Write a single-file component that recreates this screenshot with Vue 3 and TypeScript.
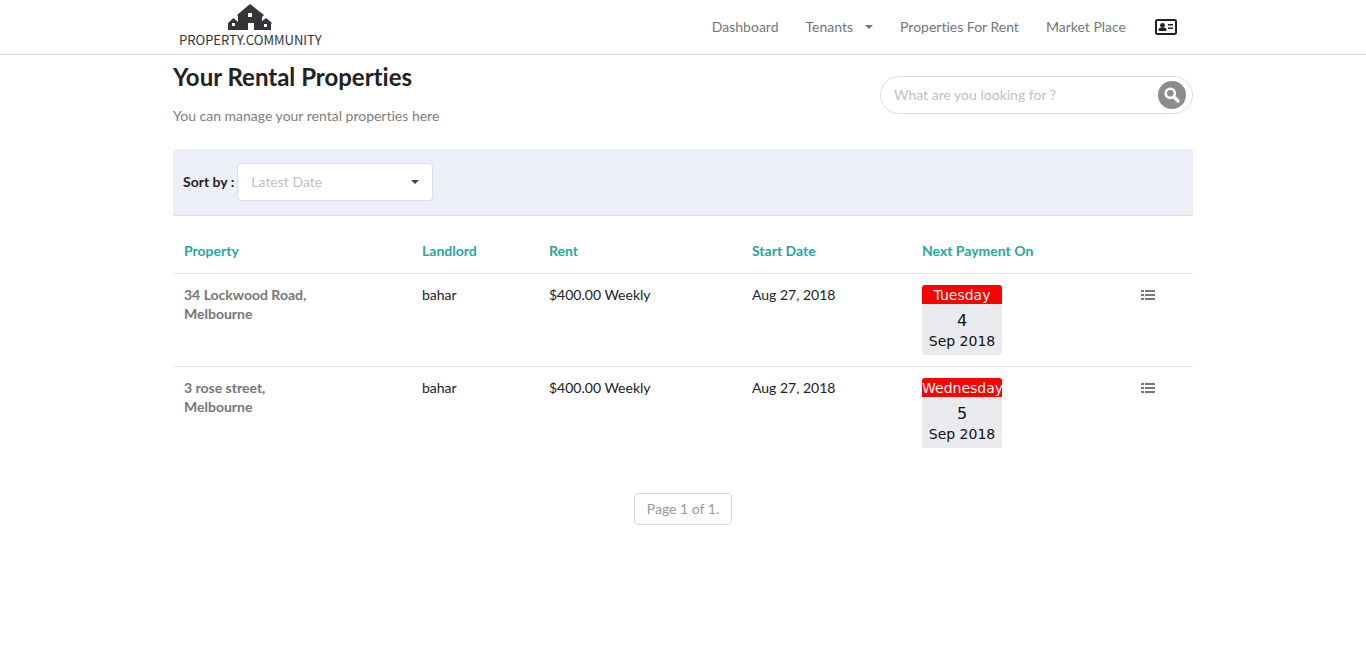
<script setup lang="ts">
import { ref } from 'vue'

interface Rental {
  street: string
  city: string
  landlord: string
  rent: string
  start: string
  weekday: string
  day: number
  month: string
}

const sort = ref('')
const query = ref('')
const rentals: Rental[] = [
  { street: '34 Lockwood Road,', city: 'Melbourne', landlord: 'bahar', rent: '$400.00 Weekly', start: 'Aug 27, 2018', weekday: 'Tuesday', day: 4, month: 'Sep 2018' },
  { street: '3 rose street,', city: 'Melbourne', landlord: 'bahar', rent: '$400.00 Weekly', start: 'Aug 27, 2018', weekday: 'Wednesday', day: 5, month: 'Sep 2018' },
]
</script>

<template>
  <div class="page">
    <header class="topbar">
      <div class="container topbar-inner">
        <a href="#" class="logo" aria-label="Property Community home">
          <svg class="houses" width="44" height="26" viewBox="0 0 44 26" aria-hidden="true">
            <path fill="#333538" fill-rule="evenodd" d="M0 26V19L5.500 14L10 18V12L9 11L22 0L36 11L34 13V17L38 14L44 19L43 20V26H26V19H20V26ZM4 19V22H7V19ZM20 9V13H24V9ZM36 20V23H39V20Z" />
          </svg>
          <span class="logo-text">PROPERTY.COMMUNITY</span>
        </a>
        <nav class="nav">
          <a href="#">Dashboard</a>
          <a href="#" class="with-caret">Tenants
            <svg width="8" height="4" viewBox="0 0 8 4" aria-hidden="true"><path fill="#777" d="M0 0H8L4 4Z" /></svg>
          </a>
          <a href="#">Properties For Rent</a>
          <a href="#">Market Place</a>
          <a href="#" class="card-link" aria-label="Account">
            <svg width="22" height="16" viewBox="0 0 22 16" aria-hidden="true">
              <rect x="1" y="1" width="20" height="14" rx="1.5" fill="none" stroke="#222" stroke-width="2" />
              <circle cx="7.5" cy="6.3" r="2.4" fill="#222" />
              <path fill="#222" d="M3.6 12V10.6Q3.8 8.6 6 8.6H9Q11.2 8.6 11.4 10.6V12ZM13 5H18V6.500H13ZM13 8.5H18V10H13Z" />
            </svg>
          </a>
        </nav>
      </div>
    </header>

    <main class="container">
      <div class="intro">
        <div>
          <h1>Your Rental Properties</h1>
          <p>You can manage your rental properties here</p>
        </div>
        <form class="search" @submit.prevent>
          <input v-model="query" type="text" aria-label="Search" placeholder="What are you looking for ?">
          <button type="submit" aria-label="Search">
            <svg width="16" height="16" viewBox="0 0 16 16" aria-hidden="true">
              <circle cx="6.3" cy="6.3" r="4.6" fill="none" stroke="#fff" stroke-width="2.6" />
              <path d="M10 10L14 14" stroke="#fff" stroke-width="3.2" stroke-linecap="round" />
            </svg>
          </button>
        </form>
      </div>

      <div class="sortbar">
        <label for="sort">Sort by :</label>
        <div class="select">
          <select id="sort" v-model="sort">
            <option value="">Latest Date</option>
            <option value="old">Earliest Date</option>
          </select>
          <svg width="8" height="4" viewBox="0 0 8 4" aria-hidden="true"><path fill="#444" d="M0 0H8L4 4Z" /></svg>
        </div>
      </div>

      <table>
        <colgroup>
          <col class="c-property"><col class="c-landlord"><col class="c-rent"><col class="c-start"><col class="c-next"><col class="c-menu">
        </colgroup>
        <thead>
          <tr>
            <th>Property</th>
            <th>Landlord</th>
            <th>Rent</th>
            <th>Start Date</th>
            <th>Next Payment On</th>
            <td></td>
          </tr>
        </thead>
        <tbody>
          <tr v-for="r in rentals" :key="r.street">
            <td class="address">{{ r.street }}<br>{{ r.city }}</td>
            <td>{{ r.landlord }}</td>
            <td>{{ r.rent }}</td>
            <td>{{ r.start }}</td>
            <td>
              <div class="calendar">
                <div class="weekday">{{ r.weekday }}</div>
                <div class="day">{{ r.day }}</div>
                <div class="month">{{ r.month }}</div>
              </div>
            </td>
            <td>
              <button class="menu" type="button" aria-label="Options">
                <svg width="14" height="12" viewBox="0 0 14 12" aria-hidden="true">
                  <path fill="#777" d="M0 1H3V3H0ZM0 5H3V7H0ZM0 9H3V11H0ZM4 1H14V3H4ZM4 5H14V7H4ZM4 9H14V11H4Z" />
                </svg>
              </button>
            </td>
          </tr>
        </tbody>
      </table>

      <div class="pager"><span>Page 1 of 1.</span></div>
    </main>
  </div>
</template>

<style>
body {
  margin: 0;
  background: #fff;
}
</style>

<style scoped>
.page {
  font-family: Lato, "Liberation Sans", sans-serif;
  font-size: 14px;
  line-height: 19px;
  font-variant-ligatures: none;
  color: #222;
}
.page * {
  box-sizing: border-box;
}
.container {
  max-width: 1020px;
  margin: 0 auto;
}
.topbar {
  border-bottom: 1px solid #d8d9da;
}
.topbar-inner {
  display: flex;
  justify-content: space-between;
  height: 54px;
}
.logo {
  display: flex;
  flex-direction: column;
  align-items: center;
  padding: 4px 6px 0;
  color: #333538;
  text-decoration: none;
}
.logo-text {
  font-family: "Noto Sans CJK JP", "Liberation Sans", sans-serif;
  font-size: 13px;
  line-height: 20px;
}
.houses {
  display: block;
}
.nav {
  display: flex;
  align-items: center;
  gap: 27px;
  padding: 0 16px 0 0;
}
.nav a {
  padding-bottom: 1px;
  color: #777;
  text-decoration: none;
}
.nav .with-caret {
  display: flex;
  align-items: center;
  gap: 12px;
}
.nav .card-link {
  display: flex;
  margin-left: 2px;
  padding: 0;
}
.intro {
  display: flex;
  justify-content: space-between;
  padding-top: 8px;
  height: 94px;
}
h1 {
  margin: 0;
  font-size: 24px;
  line-height: 28px;
  font-weight: 700;
}
p {
  margin: 15px 0 0;
  color: #808080;
}
.search {
  display: flex;
  align-items: center;
  width: 313px;
  height: 38px;
  margin-top: 13px;
  padding: 0 6px 0 13px;
  border: 1px solid #dcdddd;
  border-radius: 19px;
}
.search input {
  flex: 1;
  min-width: 0;
  padding: 0 0 2px;
  border: 0;
  outline: 0;
  background: none;
  font: inherit;
  font-variant-ligatures: none;
}
.search input::placeholder {
  color: #bfbfbf;
}
.search button {
  display: flex;
  align-items: center;
  justify-content: center;
  width: 28px;
  height: 28px;
  padding: 0;
  border: 0;
  border-radius: 50%;
  background: #8c8c8c;
}
.sortbar {
  display: flex;
  align-items: center;
  gap: 3px;
  height: 67px;
  padding-left: 10px;
  background: #eceff7;
  border-bottom: 1px solid #dcdee3;
}
.sortbar label {
  padding-bottom: 2px;
  font-weight: 700;
}
.select {
  position: relative;
  width: 196px;
}
.select select {
  display: block;
  width: 100%;
  height: 38px;
  padding: 0 14px 2px 13px;
  appearance: none;
  border: 1px solid #dcdee3;
  border-radius: 4px;
  background: #fff;
  color: #bfbfbf;
  font: inherit;
}
.select svg {
  position: absolute;
  top: 17px;
  right: 14px;
  pointer-events: none;
}
table {
  width: 100%;
  table-layout: fixed;
  border-collapse: separate;
  border-spacing: 0;
}
.c-property { width: 238px; }
.c-landlord { width: 127px; }
.c-rent { width: 203px; }
.c-start { width: 170px; }
.c-next { width: 219px; }
.c-menu { width: 63px; }
th,
td {
  padding: 11px;
  text-align: left;
  vertical-align: top;
}
th {
  padding: 25px 11px 13px;
  color: #26a99e;
  font-weight: 700;
}
tbody td {
  border-top: 1px solid #e4e5e6;
}
.address {
  color: #777;
  font-weight: 700;
}
.calendar {
  width: 80px;
  height: 70px;
  border-radius: 3px;
  background: #e9ebee;
  color: #111;
  font-family: Verdana, "DejaVu Sans", sans-serif;
  text-align: center;
}
.weekday {
  padding-top: 1px;
  border-radius: 3px 3px 0 0;
  background: #f00;
  color: #fff;
  line-height: 18px;
}
.day {
  padding-top: 6px;
  font-size: 16px;
  line-height: 21px;
}
.month {
  line-height: 20px;
}
.menu {
  display: block;
  padding: 4px 0;
  border: 0;
  background: none;
}
.menu svg {
  display: block;
}
.pager {
  display: flex;
  justify-content: center;
  padding-top: 34px;
}
.pager span {
  padding: 6px 12px;
  border: 1px solid #d8d9da;
  border-radius: 4px;
  line-height: 18px;
  color: #999;
}
</style>
